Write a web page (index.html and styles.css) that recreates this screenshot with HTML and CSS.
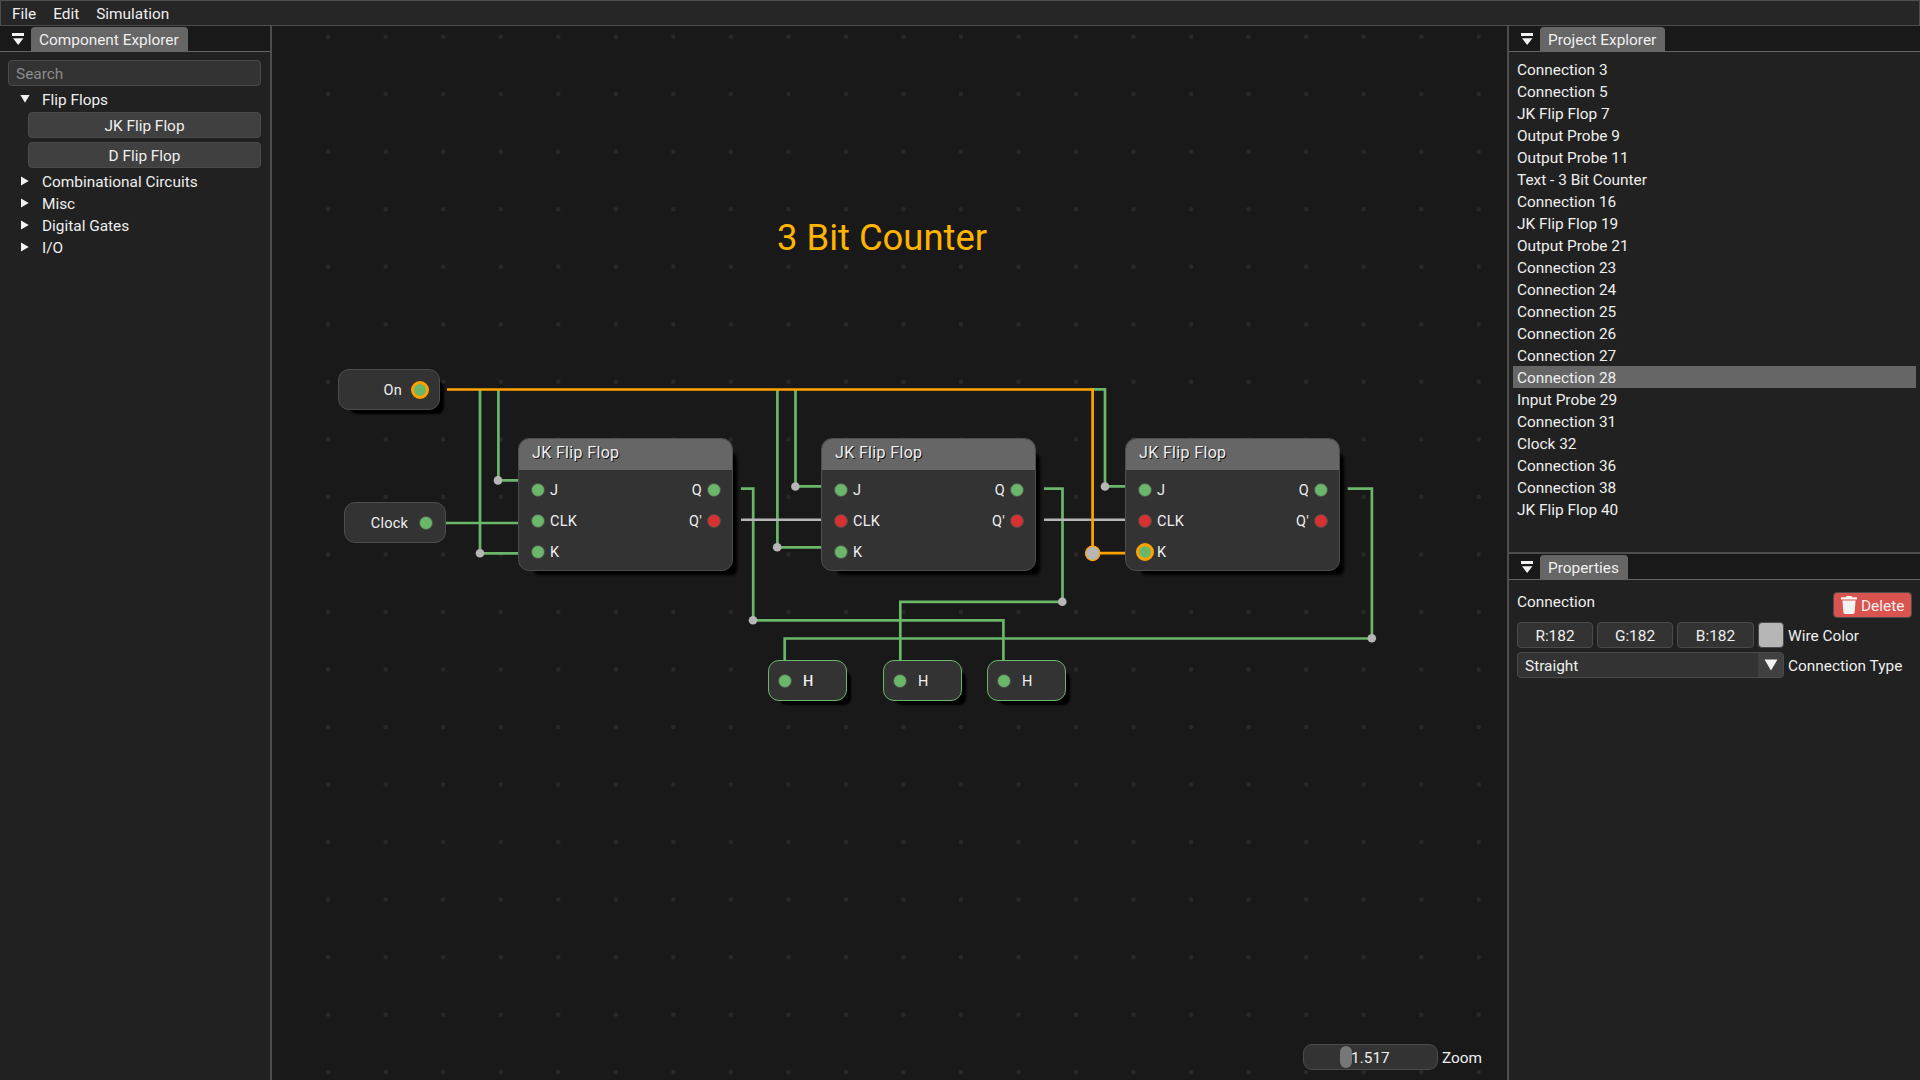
FILE: index.html
```html
<!DOCTYPE html>
<html lang="en">
<head>
<meta charset="utf-8">
<title>Circuit Simulator</title>
<link rel="stylesheet" href="styles.css">
</head>
<body>
<div class="app">
  <nav class="menubar"><span>File</span><span>Edit</span><span>Simulation</span></nav>
  <div class="workspace">
    <aside class="panel components">
      <header class="tabbar">
        <svg class="tab-menu" width="12" height="12" viewBox="0 0 12 12"><path d="M0 0h12v3H0zM1 5.3h10.4L6.2 12z"/></svg>
        <span class="tab">Component Explorer</span>
      </header>
      <div class="panel-body">
        <div class="field search">Search</div>
        <div class="tree-row"><svg class="arrow" width="10" height="10" viewBox="0 0 10 10"><path d="M.4 1h9.2L5 8.7z"/></svg>Flip Flops</div>
        <div class="button">JK Flip Flop</div>
        <div class="button">D Flip Flop</div>
        <div class="tree-row"><svg class="arrow" width="10" height="10" viewBox="0 0 10 10"><path d="M1 .4v9.2L8.7 5z"/></svg>Combinational Circuits</div>
        <div class="tree-row"><svg class="arrow" width="10" height="10" viewBox="0 0 10 10"><path d="M1 .4v9.2L8.7 5z"/></svg>Misc</div>
        <div class="tree-row"><svg class="arrow" width="10" height="10" viewBox="0 0 10 10"><path d="M1 .4v9.2L8.7 5z"/></svg>Digital Gates</div>
        <div class="tree-row"><svg class="arrow" width="10" height="10" viewBox="0 0 10 10"><path d="M1 .4v9.2L8.7 5z"/></svg>I/O</div>
      </div>
    </aside>

    <main class="canvas">
      <svg class="wires" width="1235" height="1054" viewBox="272 26 1235 1054">
        <defs>
          <pattern id="grid" x="299.4" y="7.9" width="57.53" height="57.53" patternUnits="userSpaceOnUse"><circle cx="28.76" cy="28.76" r="2.2" fill="#292929"/></pattern>
        </defs>
        <rect x="299.4" y="26" width="1207.6" height="1054" fill="url(#grid)"/>
        <g class="live">
          <path d="M480 389.4V553.3H520"/>
          <path d="M498.4 389.4V480.4H520"/>
          <path d="M445 523H520"/>
          <path d="M777.4 389.4V547.4H823"/>
          <path d="M795.5 389.4V486.4H823"/>
          <path d="M1090 389.4H1105V486.4H1127"/>
          <path d="M741 488.6H753.2V620.4H1003.4V662"/>
          <path d="M1044 488.6H1062.5V601.8H900.3V662"/>
          <path d="M1347.7 488.6H1371.9V638.5H784.7V662"/>
        </g>
        <g class="idle">
          <path d="M741 519.8H823"/>
          <path d="M1044 519.8H1127"/>
        </g>
        <path class="picked" d="M447 389.5H1092.6V553.2H1127"/>
        <g class="joint">
          <circle cx="480" cy="553.3" r="4.3"/><circle cx="498" cy="480.4" r="4.3"/>
          <circle cx="777.2" cy="547.3" r="4.3"/><circle cx="795.4" cy="486.5" r="4.3"/>
          <circle cx="1105" cy="486.5" r="4.3"/><circle cx="753" cy="620.3" r="4.3"/>
          <circle cx="1062.3" cy="601.8" r="4.3"/><circle cx="1371.8" cy="638.3" r="4.3"/>
          <circle class="joint-picked" cx="1092.7" cy="553.3" r="7.2"/>
        </g>
      </svg>

      <div class="node source cast" style="left:66px;top:343px"><span>On</span><i class="pin on picked-pin"></i></div>
      <div class="node source" style="left:72px;top:476px"><span>Clock</span><i class="pin on"></i></div>

      <div class="node chip cast" style="left:246px;top:412px">
        <h3>JK Flip Flop</h3>
        <div class="pins"><i class="pin on"></i><span>J</span><b>Q</b><i class="pin on"></i></div>
        <div class="pins"><i class="pin on"></i><span>CLK</span><b>Q'</b><i class="pin off"></i></div>
        <div class="pins"><i class="pin on"></i><span>K</span></div>
      </div>
      <div class="node chip cast" style="left:549px;top:412px">
        <h3>JK Flip Flop</h3>
        <div class="pins"><i class="pin on"></i><span>J</span><b>Q</b><i class="pin on"></i></div>
        <div class="pins"><i class="pin off"></i><span>CLK</span><b>Q'</b><i class="pin off"></i></div>
        <div class="pins"><i class="pin on"></i><span>K</span></div>
      </div>
      <div class="node chip cast" style="left:853px;top:412px">
        <h3>JK Flip Flop</h3>
        <div class="pins"><i class="pin on"></i><span>J</span><b>Q</b><i class="pin on"></i></div>
        <div class="pins"><i class="pin off"></i><span>CLK</span><b>Q'</b><i class="pin off"></i></div>
        <div class="pins"><i class="pin on picked-pin"></i><span>K</span></div>
      </div>

      <div class="node probe cast" style="left:496px;top:634px"><i class="pin on"></i><span class="strong">H</span></div>
      <div class="node probe cast" style="left:611px;top:634px"><i class="pin on"></i><span>H</span></div>
      <div class="node probe cast" style="left:715px;top:634px"><i class="pin on"></i><span>H</span></div>

      <div class="title" style="left:505px;top:189px">3 Bit Counter</div>

      <div class="zoom"><div class="slider"><i class="grab"></i><span>1.517</span></div><span class="zoom-label">Zoom</span></div>
    </main>

    <aside class="right">
      <section class="panel project">
        <header class="tabbar">
          <svg class="tab-menu" width="12" height="12" viewBox="0 0 12 12"><path d="M0 0h12v3H0zM1 5.3h10.4L6.2 12z"/></svg>
          <span class="tab">Project Explorer</span>
        </header>
        <ul class="list">
          <li>Connection 3</li><li>Connection 5</li><li>JK Flip Flop 7</li><li>Output Probe 9</li><li>Output Probe 11</li>
          <li>Text - 3 Bit Counter</li><li>Connection 16</li><li>JK Flip Flop 19</li><li>Output Probe 21</li><li>Connection 23</li>
          <li>Connection 24</li><li>Connection 25</li><li>Connection 26</li><li>Connection 27</li><li class="selected">Connection 28</li>
          <li>Input Probe 29</li><li>Connection 31</li><li>Clock 32</li><li>Connection 36</li><li>Connection 38</li><li>JK Flip Flop 40</li>
        </ul>
      </section>
      <section class="panel properties">
        <header class="tabbar">
          <svg class="tab-menu" width="12" height="12" viewBox="0 0 12 12"><path d="M0 0h12v3H0zM1 5.3h10.4L6.2 12z"/></svg>
          <span class="tab">Properties</span>
        </header>
        <div class="props">
          <div class="prop-head"><span>Connection</span>
            <div class="delete"><svg width="16" height="18" viewBox="0 0 16 18"><path d="M0 1.2h4.6L5.6 0h4.8l1 1.2H16v2.2H0zM1.400 4.400h13.200L13.600 16.600q-.1 1.400-1.600 1.400H4q-1.500 0-1.600-1.400z"/></svg><span>Delete</span></div>
          </div>
          <div class="prop-row">
            <div class="field num">R:182</div><div class="field num">G:182</div><div class="field num last">B:182</div>
            <div class="swatch"></div><span class="label">Wire Color</span>
          </div>
          <div class="prop-row">
            <div class="field combo"><span class="label">Straight</span><div class="combo-btn"><svg width="14" height="12" viewBox="0 0 14 12"><path d="M.5.5h13L7 11.500z"/></svg></div></div>
            <span class="label">Connection Type</span>
          </div>
        </div>
      </section>
    </aside>
  </div>
</div>
</body>
</html>
```
FILE: styles.css
```css
* { box-sizing: border-box; }
body { margin: 0; background: #191919; color: #efefef; font: 15.4px/18px Roboto, sans-serif; white-space: nowrap; }
svg { display: block; flex: none; }
svg path { fill: #f2f2f2; }
i { font-style: normal; }

.app { width: 1920px; height: 1080px; display: flex; flex-direction: column; overflow: hidden; }
.menubar { height: 26px; flex: none; border: 1px solid #4d4d4d; background: #262626; display: flex; gap: 17px; padding: 4px 11px; }
.workspace { flex: 1; display: flex; min-height: 0; }

.panel { background: #212121; }
.components { width: 272px; border-right: 2px solid #4d4d4d; }
.tabbar { height: 26px; background: #191919; border-bottom: 1px solid #666; display: flex; align-items: flex-end; padding-left: 12px; }
.tab-menu { margin-bottom: 6px; margin-right: 7px; }
.tab { height: 24px; padding: 4px 9px 0 8px; border-radius: 4px 4px 0 0; background: #666; }
.panel-body { padding: 8px 9px 8px 8px; display: flex; flex-direction: column; gap: 4px; }
.field, .button { height: 26px; border: 1px solid #4b4b4b; border-radius: 4px; background: #333; padding: 4px 7px 0; }
.search { color: #8c8c8c; }
.button { background: #404040; margin-left: 20px; padding-right: 7px; text-align: center; }
.tree-row { height: 18px; display: flex; align-items: flex-start; padding: 1px 0 0 12px; gap: 12px; }
.arrow { margin-top: 3px; }

.canvas { width: 1235px; position: relative; background: #191919; overflow: hidden; }
.wires path { fill: none; stroke-width: 2.7; }
.live path { stroke: #6ab76a; }
.idle path { stroke: #b6b6b6; stroke-width: 2.5; }
.wires .picked { stroke: #ffa200; }
.joint circle { fill: #b6b6b6; }
.joint .joint-picked { stroke: #ffa200; stroke-width: 1.3; }

.node { position: absolute; background: #333; border: 1px solid #4d4d4d; border-radius: 11px; font-size: 14.5px; }
.node span, .node b { padding-top: 2px; font-weight: 400; }
.cast { box-shadow: 8px 8px 2px -4px #000; }
.source { width: 102px; height: 41px; display: flex; align-items: center; justify-content: flex-end; gap: 11px; padding-right: 12px; letter-spacing: 0.2px; }
.pin { width: 14px; height: 14px; border-radius: 50%; border: 1px solid #4d4d4d; flex: none; }
.on { background: #6ab76a; }
.off { background: #d63232; }
.picked-pin { width: 18px; height: 18px; border: 3px solid #ffa200; margin: 0 -2px; }
.chip { width: 215px; height: 133px; letter-spacing: 0.2px; }
.chip.cast { box-shadow: 10px 10px 3px -6px #000; }
.chip h3 { margin: 0 0 4px; height: 31px; padding: 5px 0 0 13px; background: #666; border-radius: 10px 10px 0 0; font-weight: 400; font-size: 16px; line-height: 18px; letter-spacing: 0.35px; text-shadow: 1px 1px 0 #111; }
.pins { height: 31px; display: flex; align-items: center; padding: 0 11px 0 12px; gap: 5px; }
.pins b { margin-left: auto; }
.probe { width: 79px; height: 41px; border-color: #6ab76a; display: flex; align-items: center; gap: 11px; padding-left: 9px; }
.node .strong { font-weight: 500; }
.title { position: absolute; color: #ffb400; font-size: 36.4px; line-height: 46px; }
.zoom { position: absolute; right: 25px; bottom: 10px; display: flex; align-items: center; gap: 4px; }
.slider { width: 135px; height: 26px; border: 1px solid #4b4b4b; border-radius: 9px; background: #333; text-align: center; padding-top: 4px; position: relative; }
.grab { position: absolute; left: 36px; top: 1px; width: 12px; height: 22px; border-radius: 6px; background: #777; }
.slider span { position: relative; }
.zoom-label { padding-top: 1px; }

.right { width: 413px; border-left: 2px solid #4d4d4d; display: flex; flex-direction: column; }
.project { height: 528px; flex: none; border-bottom: 2px solid #4d4d4d; }
.properties { flex: 1; }
.list { list-style: none; margin: 0; padding: 6px 4px; }
.list li { height: 22px; padding: 3px 4px 0; }
.list .selected { background: #666; }
.props { padding: 12px 8px; }
.prop-head { display: flex; justify-content: space-between; height: 30px; }
.prop-head > span { padding-top: 1px; }
.delete { width: 79px; height: 26px; background: #d9534f; border: 1px solid #4b4b4b; border-radius: 4px; display: flex; align-items: center; gap: 4px; padding-left: 7px; }
.delete span, .label { padding-top: 2px; }
.prop-row { display: flex; gap: 4px; margin-bottom: 4px; align-items: center; }
.num { width: 76px; text-align: center; }
.last { width: 77px; }
.swatch { width: 26px; height: 26px; border-radius: 4px; background: #b6b6b6; border: 1px solid #4b4b4b; }
.combo { width: 267px; display: flex; justify-content: space-between; padding: 0 0 0 7px; align-items: center; }
.combo-btn { width: 25px; height: 24px; background: #404040; display: flex; align-items: center; justify-content: center; }
```
